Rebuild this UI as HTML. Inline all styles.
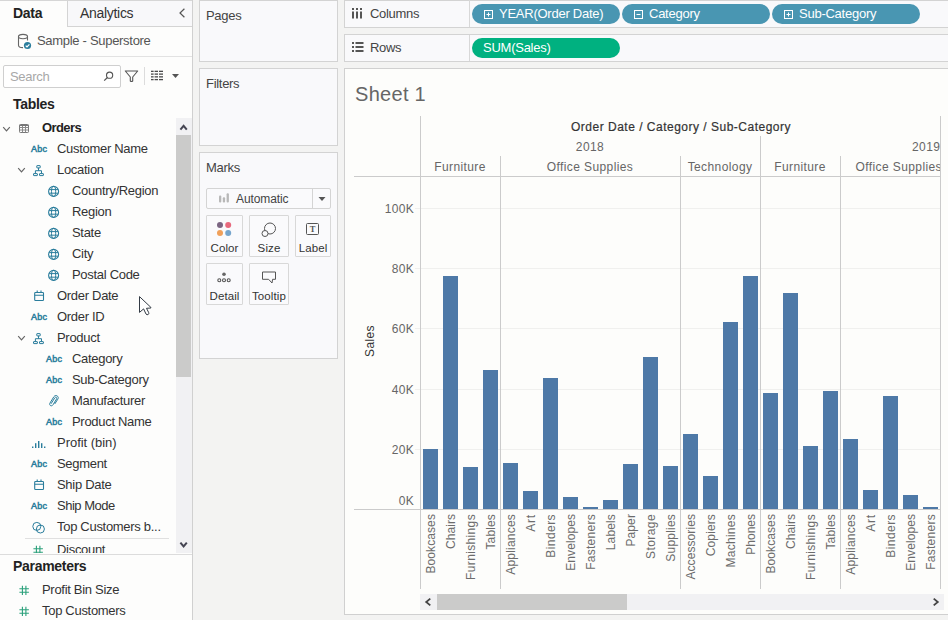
<!DOCTYPE html>
<html><head><meta charset="utf-8"><title>Tableau - Sheet 1</title>
<style>
*{box-sizing:border-box;margin:0;padding:0}
html,body{width:948px;height:620px;overflow:hidden}
body{background:#f3f3f2;font-family:"Liberation Sans",sans-serif;font-size:13px;color:#333;position:relative}
.abs{position:absolute}
#side{position:absolute;left:0;top:0;width:192px;height:620px;background:#fdfdfc;overflow:hidden}
.t{position:absolute;white-space:nowrap;line-height:16px;height:16px;letter-spacing:-0.3px}
.b{font-weight:bold}
.card{position:absolute;background:#f9f9fb;border:1px solid #d3d3d3}
.fld{position:absolute;left:0;height:21px;width:176px}
.fld .t{top:2px;color:#333}
.ic{position:absolute}
.abc{position:absolute;font-size:9px;color:#2a7d9c;letter-spacing:0.3px;line-height:12px;font-weight:normal;-webkit-text-stroke:0.5px #2a7d9c}
.pill{position:absolute;height:20px;border-radius:10px;color:#fff;font-size:13px;line-height:20px;white-space:nowrap;letter-spacing:-0.25px}
.mbtn{position:absolute;background:#fafafc;border:1px solid #d8d8d8;border-radius:1px}
.mbtn span{position:absolute;left:0;width:100%;text-align:center;font-size:11.5px;color:#333;top:25px;line-height:14px;letter-spacing:0.1px}
.vl{position:absolute;width:1px;background:#cbcbcb}
.hl{position:absolute;height:1px;background:#cbcbcb}
.gl{position:absolute;height:1px;background:#f0f0ee;left:415px;width:525px}
.bar{position:absolute;width:15px;background:#4e79a7}
.yl{position:absolute;width:60px;text-align:right;font-size:12px;letter-spacing:0.3px;color:#666;line-height:14px;left:354px}
.hd{position:absolute;font-size:12px;letter-spacing:0.4px;color:#666;line-height:14px;white-space:nowrap;text-align:center}
.xl{position:absolute;font-size:12px;letter-spacing:0.05px;color:#666;line-height:14px;white-space:nowrap;transform-origin:0 0;transform:rotate(-90deg);text-align:right;width:80px;color:#6c6c6c}
</style></head>
<body>
<div id="side">
<div class="abs" style="left:67px;top:0;width:125px;height:27px;background:#f8f8fa;border-left:1px solid #d4d4d4;border-bottom:1px solid #d4d4d4"></div>
<div class="hl" style="left:0;top:0;width:192px;background:#d6d6d6"></div>
<div class="t b" style="left:13px;top:5px;font-size:14px;color:#222">Data</div>
<div class="t" style="left:80px;top:5px;font-size:14px;color:#333">Analytics</div>
<svg class="ic" style="left:176px;top:6px" width="10" height="14" viewBox="0 0 10 14"><path d="M8.4 2.8 L4 7 L8.4 11.2" fill="none" stroke="#555" stroke-width="1.2"/></svg>
<svg class="ic" style="left:17px;top:32px" width="16" height="18" viewBox="0 0 16 18"><path d="M1.5 4.6 C1.5 1.6 10.5 1.6 10.5 4.6 L10.5 8.5 M1.5 4.6 C1.5 7.4 10.5 7.4 10.5 4.6 M1.5 4.6 L1.5 13.2 C1.5 15 4 15.6 6 15.6" fill="none" stroke="#666" stroke-width="1.1"/><circle cx="10.5" cy="13.5" r="3.6" fill="#2a7d9c"/><path d="M8.7 13.6 L10 14.9 L12.4 12.3" fill="none" stroke="#fff" stroke-width="1.2"/></svg>
<div class="t" style="left:37px;top:33px;font-size:13px;color:#555">Sample - Superstore</div>
<div class="hl" style="left:0;top:56px;width:192px;background:#e2e2e2"></div>
<div class="abs" style="left:3px;top:65px;width:118px;height:23px;border:1px solid #cfcfcf;border-radius:2px;background:#fff"></div>
<div class="t" style="left:10px;top:69px;font-size:13px;color:#a8a8a8">Search</div>
<svg class="ic" style="left:102px;top:70px" width="13" height="13" viewBox="0 0 13 13"><circle cx="7.6" cy="5.2" r="3.1" fill="none" stroke="#555" stroke-width="1.1"/><path d="M5.4 7.5 L2.2 10.6" stroke="#555" stroke-width="1.2" fill="none"/></svg>
<svg class="ic" style="left:124px;top:69px" width="15" height="15" viewBox="0 0 15 15"><path d="M1.3 2 H13.7 L8.7 8 V12 Q7.5 13 6.3 12 V8 Z" fill="none" stroke="#555" stroke-width="1.1" stroke-linejoin="round"/></svg>
<div class="vl" style="left:144px;top:67px;height:18px;background:#dcdcdc"></div>
<svg class="ic" style="left:151px;top:70px" width="13" height="11" viewBox="0 0 13 11"><g fill="#4a4a4a"><rect x="0" y="0.7" width="2.6" height="1.3"/><rect x="3.6" y="0.7" width="3.4" height="1.3"/><rect x="8" y="0.7" width="4" height="1.3"/><rect x="0" y="3.45" width="2.6" height="1.3"/><rect x="3.6" y="3.45" width="3.4" height="1.3"/><rect x="8" y="3.45" width="4" height="1.3"/><rect x="0" y="6.2" width="2.6" height="1.3"/><rect x="3.6" y="6.2" width="3.4" height="1.3"/><rect x="8" y="6.2" width="4" height="1.3"/><rect x="0" y="8.95" width="2.6" height="1.3"/><rect x="3.6" y="8.95" width="3.4" height="1.3"/><rect x="8" y="8.95" width="4" height="1.3"/></g></svg>
<svg class="ic" style="left:172px;top:74px" width="8" height="5" viewBox="0 0 8 5"><path d="M0 0 H7 L3.5 4 Z" fill="#555"/></svg>
<div class="t b" style="left:13px;top:96px;font-size:14px;color:#222">Tables</div>
<svg class="ic" style="left:2px;top:126px" width="9" height="7" viewBox="0 0 9 7"><path d="M1.2 1.2 L4.5 4.8 L7.8 1.2" fill="none" stroke="#666" stroke-width="1.2"/></svg>
<svg class="ic" style="left:19px;top:124px" width="11" height="10" viewBox="0 0 11 10"><rect x="0.5" y="0.5" width="9" height="8" rx="0.8" fill="none" stroke="#777" stroke-width="1"/><path d="M0.5 1.5 H9.5" stroke="#777" stroke-width="1" fill="none"/><path d="M0.5 3.5 H9.5 M0.5 6 H9.5" stroke="#8a8a8a" stroke-width="1" fill="none"/><path d="M3.5 2 V8.5 M6.5 2 V8.5" stroke="#8a8a8a" stroke-width="1" fill="none"/></svg>
<div class="t b" style="left:42px;top:120px;font-size:13px;color:#222;letter-spacing:-0.6px">Orders</div>
<div class="abs" style="left:0;top:116px;width:176px;height:437px;overflow:hidden">
<div class="abc" style="left:31px;top:27px">Abc</div>
<div class="t" style="left:57px;top:25px;font-size:13px">Customer Name</div>
<svg class="ic" style="left:17px;top:51px" width="9" height="7" viewBox="0 0 9 7"><path d="M1.2 1.2 L4.5 4.8 L7.8 1.2" fill="none" stroke="#666" stroke-width="1.2"/></svg>
<svg class="ic" style="left:33px;top:49px" width="12" height="12" viewBox="0 0 12 12"><g fill="none" stroke="#2a7d9c" stroke-width="1"><rect x="3.8" y="0.6" width="3.4" height="2.3" rx="0.3"/><rect x="0.5" y="8.6" width="3.9" height="2" rx="0.3"/><rect x="6.5" y="8.6" width="3.9" height="2" rx="0.3"/><path d="M5.5 2.9 V5.7 M2.4 8.6 V5.7 H8.5 V8.6"/></g></svg>
<div class="t" style="left:57px;top:46px;font-size:13px">Location</div>
<svg class="ic" style="left:48px;top:69px" width="12" height="12" viewBox="0 0 12 12"><g fill="none" stroke="#2a7d9c" stroke-width="1"><circle cx="5.6" cy="6.4" r="5" stroke-width="1.1"/><ellipse cx="5.6" cy="6.4" rx="2.1" ry="5"/><path d="M1.2 4.6 H10 M1.2 8.2 H10"/></g></svg>
<div class="t" style="left:72px;top:67px;font-size:13px">Country/Region</div>
<svg class="ic" style="left:48px;top:90px" width="12" height="12" viewBox="0 0 12 12"><g fill="none" stroke="#2a7d9c" stroke-width="1"><circle cx="5.6" cy="6.4" r="5" stroke-width="1.1"/><ellipse cx="5.6" cy="6.4" rx="2.1" ry="5"/><path d="M1.2 4.6 H10 M1.2 8.2 H10"/></g></svg>
<div class="t" style="left:72px;top:88px;font-size:13px">Region</div>
<svg class="ic" style="left:48px;top:111px" width="12" height="12" viewBox="0 0 12 12"><g fill="none" stroke="#2a7d9c" stroke-width="1"><circle cx="5.6" cy="6.4" r="5" stroke-width="1.1"/><ellipse cx="5.6" cy="6.4" rx="2.1" ry="5"/><path d="M1.2 4.6 H10 M1.2 8.2 H10"/></g></svg>
<div class="t" style="left:72px;top:109px;font-size:13px">State</div>
<svg class="ic" style="left:48px;top:132px" width="12" height="12" viewBox="0 0 12 12"><g fill="none" stroke="#2a7d9c" stroke-width="1"><circle cx="5.6" cy="6.4" r="5" stroke-width="1.1"/><ellipse cx="5.6" cy="6.4" rx="2.1" ry="5"/><path d="M1.2 4.6 H10 M1.2 8.2 H10"/></g></svg>
<div class="t" style="left:72px;top:130px;font-size:13px">City</div>
<svg class="ic" style="left:48px;top:153px" width="12" height="12" viewBox="0 0 12 12"><g fill="none" stroke="#2a7d9c" stroke-width="1"><circle cx="5.6" cy="6.4" r="5" stroke-width="1.1"/><ellipse cx="5.6" cy="6.4" rx="2.1" ry="5"/><path d="M1.2 4.6 H10 M1.2 8.2 H10"/></g></svg>
<div class="t" style="left:72px;top:151px;font-size:13px">Postal Code</div>
<svg class="ic" style="left:33px;top:174px" width="12" height="12" viewBox="0 0 12 12"><g fill="none" stroke="#2a7d9c" stroke-width="1.1"><rect x="1.7" y="2.5" width="8.8" height="8" rx="0.8"/><path d="M1.7 5.3 H10.5 M4.2 0.6 V3 M8 0.6 V3"/></g></svg>
<div class="t" style="left:57px;top:172px;font-size:13px">Order Date</div>
<div class="abc" style="left:31px;top:195px">Abc</div>
<div class="t" style="left:57px;top:193px;font-size:13px">Order ID</div>
<svg class="ic" style="left:17px;top:219px" width="9" height="7" viewBox="0 0 9 7"><path d="M1.2 1.2 L4.5 4.8 L7.8 1.2" fill="none" stroke="#666" stroke-width="1.2"/></svg>
<svg class="ic" style="left:33px;top:217px" width="12" height="12" viewBox="0 0 12 12"><g fill="none" stroke="#2a7d9c" stroke-width="1"><rect x="3.8" y="0.6" width="3.4" height="2.3" rx="0.3"/><rect x="0.5" y="8.6" width="3.9" height="2" rx="0.3"/><rect x="6.5" y="8.6" width="3.9" height="2" rx="0.3"/><path d="M5.5 2.9 V5.7 M2.4 8.6 V5.7 H8.5 V8.6"/></g></svg>
<div class="t" style="left:57px;top:214px;font-size:13px">Product</div>
<div class="abc" style="left:46px;top:237px">Abc</div>
<div class="t" style="left:72px;top:235px;font-size:13px">Category</div>
<div class="abc" style="left:46px;top:258px">Abc</div>
<div class="t" style="left:72px;top:256px;font-size:13px">Sub-Category</div>
<svg class="ic" style="left:48px;top:278px" width="12" height="14" viewBox="0 0 12 14"><g fill="none" stroke="#2a7d9c" stroke-width="1" stroke-linecap="round"><path d="M3.2 9.5 L6.8 3.8 C7.6 2.6 9.4 3.6 8.6 4.9 L5 10.8 C3.6 13 0.6 11.2 2 9 L5.8 2.8 C7.6 0 11.6 2.4 9.8 5.2 L7 9.6"/></g></svg>
<div class="t" style="left:72px;top:277px;font-size:13px">Manufacturer</div>
<div class="abc" style="left:46px;top:300px">Abc</div>
<div class="t" style="left:72px;top:298px;font-size:13px">Product Name</div>
<svg class="ic" style="left:32px;top:321px" width="14" height="12" viewBox="0 0 14 12"><g fill="#2a7d9c"><rect x="0" y="9.5" width="1.4" height="1.5"/><rect x="3" y="6.2" width="1.4" height="4.8"/><rect x="6" y="4" width="1.4" height="7"/><rect x="9" y="6.2" width="1.4" height="4.8"/><rect x="12" y="9.5" width="1.4" height="1.5"/></g></svg>
<div class="t" style="left:57px;top:319px;font-size:13px;letter-spacing:-0.03px">Profit (bin)</div>
<div class="abc" style="left:31px;top:342px">Abc</div>
<div class="t" style="left:57px;top:340px;font-size:13px">Segment</div>
<svg class="ic" style="left:33px;top:363px" width="12" height="12" viewBox="0 0 12 12"><g fill="none" stroke="#2a7d9c" stroke-width="1.1"><rect x="1.7" y="2.5" width="8.8" height="8" rx="0.8"/><path d="M1.7 5.3 H10.5 M4.2 0.6 V3 M8 0.6 V3"/></g></svg>
<div class="t" style="left:57px;top:361px;font-size:13px">Ship Date</div>
<div class="abc" style="left:31px;top:384px">Abc</div>
<div class="t" style="left:57px;top:382px;font-size:13px;letter-spacing:-0.5px">Ship Mode</div>
<svg class="ic" style="left:32px;top:405px" width="14" height="13" viewBox="0 0 14 13"><g fill="none" stroke="#2a7d9c" stroke-width="1"><circle cx="4.8" cy="5.4" r="4"/><circle cx="8.4" cy="8" r="4"/></g></svg>
<div class="t" style="left:57px;top:403px;font-size:13px">Top Customers b...</div>
<div class="hl" style="left:25px;top:422px;width:144px;background:#e0e0e0"></div>
<svg class="ic" style="left:33px;top:429px" width="11" height="12" viewBox="0 0 11 12"><g fill="none" stroke="#2aa07a" stroke-width="1.1"><path d="M3.4 0.8 V10 M6.9 0.8 V10 M0.4 3.7 H9.9 M0.4 7.2 H9.9"/></g></svg>
<div class="t" style="left:57px;top:426px;font-size:13px">Discount</div>
</div>
<div class="abs" style="left:176px;top:118px;width:16px;height:435px;background:#f1f1f3"></div>
<div class="abs" style="left:176px;top:135px;width:15px;height:242px;background:#cbcbca"></div>
<svg class="ic" style="left:178px;top:123px" width="10" height="8" viewBox="0 0 10 8"><path d="M2.4 6.6 L5.6 2.8 L8.8 6.6" fill="none" stroke="#454552" stroke-width="2"/></svg>
<svg class="ic" style="left:178px;top:541px" width="10" height="8" viewBox="0 0 10 8"><path d="M2.4 1.6 L5.6 5.4 L8.8 1.6" fill="none" stroke="#454552" stroke-width="2"/></svg>
<div class="hl" style="left:0;top:554px;width:192px;background:#dcdcdc"></div>
<div class="t b" style="left:13px;top:558px;font-size:14px;color:#222">Parameters</div>
<svg class="ic" style="left:19px;top:585px" width="11" height="12" viewBox="0 0 11 12"><g fill="none" stroke="#2aa07a" stroke-width="1.1"><path d="M3.4 0.8 V10 M6.9 0.8 V10 M0.4 3.7 H9.9 M0.4 7.2 H9.9"/></g></svg>
<div class="t" style="left:42px;top:582px;font-size:13px">Profit Bin Size</div>
<svg class="ic" style="left:19px;top:606px" width="11" height="12" viewBox="0 0 11 12"><g fill="none" stroke="#2aa07a" stroke-width="1.1"><path d="M3.4 0.8 V10 M6.9 0.8 V10 M0.4 3.7 H9.9 M0.4 7.2 H9.9"/></g></svg>
<div class="t" style="left:42px;top:603px;font-size:13px">Top Customers</div>
</div>
<div class="vl" style="left:192px;top:0;height:620px;background:#d0d0d0"></div>
<div class="card" style="left:199px;top:0;width:139px;height:62px"></div>
<div class="t" style="left:206px;top:8px;font-size:13px;color:#444">Pages</div>
<div class="card" style="left:199px;top:68px;width:139px;height:78px"></div>
<div class="t" style="left:206px;top:76px;font-size:13px;color:#444">Filters</div>
<div class="card" style="left:199px;top:152px;width:139px;height:207px"></div>
<div class="t" style="left:206px;top:160px;font-size:13px;color:#444">Marks</div>
<div class="abs" style="left:206px;top:188px;width:125px;height:21px;border:1px solid #d4d4d4;border-radius:2px;background:#fafafc"></div>
<div class="vl" style="left:312px;top:189px;height:19px;background:#d4d4d4"></div>
<svg class="ic" style="left:219px;top:193px" width="11" height="10" viewBox="0 0 11 10"><g fill="#b8b8b8"><rect x="0" y="2.6" width="2.3" height="7" rx="1"/><rect x="3.8" y="4.3" width="2.3" height="5.3" rx="1"/><rect x="7.6" y="0.2" width="2.3" height="9.4" rx="1"/></g></svg>
<div class="t" style="left:236px;top:191px;font-size:12px;color:#444;letter-spacing:-0.1px">Automatic</div>
<svg class="ic" style="left:318px;top:197px" width="8" height="5" viewBox="0 0 8 5"><path d="M0.5 0 H7.5 L4 4 Z" fill="#555"/></svg>
<div class="mbtn" style="left:206px;top:215px;width:37px;height:42px"><span>Color</span></div>
<svg class="ic" style="left:216px;top:221px" width="17" height="17" viewBox="0 0 17 17"><circle cx="4" cy="4" r="3" fill="#7b6582"/><circle cx="12.2" cy="4" r="3" fill="#e8697d"/><circle cx="4" cy="12" r="3" fill="#f0a05a"/><circle cx="12.2" cy="12" r="3" fill="#76a5cc"/></svg>
<div class="mbtn" style="left:249px;top:215px;width:40px;height:42px"><span>Size</span></div>
<svg class="ic" style="left:261px;top:222px" width="16" height="16" viewBox="0 0 16 16"><circle cx="9" cy="6.5" r="5.5" fill="none" stroke="#555" stroke-width="1"/><circle cx="4" cy="11.5" r="3" fill="#fafafc" stroke="#555" stroke-width="1"/></svg>
<div class="mbtn" style="left:295px;top:215px;width:36px;height:42px"><span>Label</span></div>
<svg class="ic" style="left:306px;top:223px" width="14" height="13" viewBox="0 0 14 13"><rect x="0.5" y="0.5" width="12" height="11" rx="1" fill="none" stroke="#555" stroke-width="1"/><text x="6.5" y="9.3" font-family="Liberation Serif, serif" font-size="8.5" font-weight="bold" text-anchor="middle" fill="#555">T</text></svg>
<div class="mbtn" style="left:206px;top:263px;width:37px;height:42px"><span>Detail</span></div>
<svg class="ic" style="left:217px;top:272px" width="14" height="12" viewBox="0 0 14 12"><circle cx="7" cy="2.3" r="1.8" fill="#666"/><circle cx="2.3" cy="8.3" r="1.5" fill="none" stroke="#555" stroke-width="1.1"/><circle cx="7" cy="8.3" r="1.5" fill="none" stroke="#555" stroke-width="1.1"/><circle cx="11.7" cy="8.3" r="1.5" fill="none" stroke="#555" stroke-width="1.1"/></svg>
<div class="mbtn" style="left:249px;top:263px;width:40px;height:42px"><span>Tooltip</span></div>
<svg class="ic" style="left:261px;top:271px" width="16" height="14" viewBox="0 0 16 14"><path d="M1.5 1 H14.5 V8.3 H11.6 L11 12 L7.6 8.3 H1.5 Z" fill="none" stroke="#555" stroke-width="1" stroke-linejoin="round"/></svg>
<div class="card" style="left:344px;top:0;width:611px;height:28px"></div>
<div class="vl" style="left:469px;top:0;height:27px;background:#d8d8d8"></div>
<svg class="ic" style="left:352px;top:8px" width="11" height="11" viewBox="0 0 11 11"><g fill="#555"><rect x="0" y="0" width="2" height="2"/><rect x="4" y="0" width="2" height="2"/><rect x="8" y="0" width="2" height="2"/><rect x="0" y="3.5" width="2" height="7"/><rect x="4" y="3.5" width="2" height="7"/><rect x="8" y="3.5" width="2" height="7"/></g></svg>
<div class="t" style="left:370px;top:6px;font-size:13px;color:#444">Columns</div>
<div class="card" style="left:344px;top:34px;width:611px;height:28px"></div>
<div class="vl" style="left:469px;top:35px;height:26px;background:#d8d8d8"></div>
<svg class="ic" style="left:352px;top:42px" width="12" height="10" viewBox="0 0 12 10"><g fill="#555"><rect x="0" y="0" width="2" height="2"/><rect x="3.5" y="0" width="8" height="2"/><rect x="0" y="4" width="2" height="2"/><rect x="3.5" y="4" width="8" height="2"/><rect x="0" y="8" width="2" height="2"/><rect x="3.5" y="8" width="8" height="2"/></g></svg>
<div class="t" style="left:370px;top:40px;font-size:13px;color:#444">Rows</div>
<div class="pill" style="left:472px;top:4px;width:148px;background:#4996b2"><svg class="ic" style="left:12px;top:6px" width="10" height="10" viewBox="0 0 10 10"><rect x="0.5" y="0.5" width="8" height="8" fill="none" stroke="#fff" stroke-width="1"/><path d="M2.5 4.5 H6.5" stroke="#fff" stroke-width="1"/><path d="M4.5 2.5 V6.5" stroke="#fff" stroke-width="1"/></svg><span class="abs" style="left:27px;top:0">YEAR(Order Date)</span></div>
<div class="pill" style="left:622px;top:4px;width:148px;background:#4996b2"><svg class="ic" style="left:12px;top:6px" width="10" height="10" viewBox="0 0 10 10"><rect x="0.5" y="0.5" width="8" height="8" fill="none" stroke="#fff" stroke-width="1"/><path d="M2.5 4.5 H6.5" stroke="#fff" stroke-width="1"/></svg><span class="abs" style="left:27px;top:0">Category</span></div>
<div class="pill" style="left:772px;top:4px;width:148px;background:#4996b2"><svg class="ic" style="left:12px;top:6px" width="10" height="10" viewBox="0 0 10 10"><rect x="0.5" y="0.5" width="8" height="8" fill="none" stroke="#fff" stroke-width="1"/><path d="M2.5 4.5 H6.5" stroke="#fff" stroke-width="1"/><path d="M4.5 2.5 V6.5" stroke="#fff" stroke-width="1"/></svg><span class="abs" style="left:27px;top:0">Sub-Category</span></div>
<div class="pill" style="left:472px;top:38px;width:148px;background:#00b180"><span class="abs" style="left:11px;top:0">SUM(Sales)</span></div>
<div class="abs" style="left:344px;top:68px;width:611px;height:547px;background:#fdfdfb;border:1px solid #d0d0d0"></div>
<div class="t" style="left:355px;top:82px;font-size:20px;line-height:24px;height:24px;color:#666;letter-spacing:0.3px">Sheet 1</div>
<div class="hd" style="left:531px;top:120px;width:300px;color:#333;letter-spacing:0.5px;-webkit-text-stroke:0.2px #333">Order Date / Category / Sub-Category</div>
<div class="hd" style="left:560px;top:140px;width:60px">2018</div>
<div class="abs" style="left:760px;top:116px;width:180px;height:400px;overflow:hidden"><div class="hd" style="left:152px;top:24px;width:60px;text-align:left">2019</div><div class="hd" style="left:95.5px;top:44px;text-align:left">Office Supplies</div></div>
<div class="hd" style="left:400px;top:160px;width:120px">Furniture</div>
<div class="hd" style="left:530px;top:160px;width:120px">Office Supplies</div>
<div class="hd" style="left:660px;top:160px;width:120px">Technology</div>
<div class="hd" style="left:740px;top:160px;width:120px">Furniture</div>
<div class="gl" style="top:208px"></div>
<div class="gl" style="top:268px"></div>
<div class="gl" style="top:328px"></div>
<div class="gl" style="top:389px"></div>
<div class="gl" style="top:449px"></div>
<div class="bar" style="left:423px;top:449px;height:60px"></div>
<div class="bar" style="left:443px;top:276px;height:233px"></div>
<div class="bar" style="left:463px;top:467px;height:42px"></div>
<div class="bar" style="left:483px;top:370px;height:139px"></div>
<div class="bar" style="left:503px;top:463px;height:46px"></div>
<div class="bar" style="left:523px;top:491px;height:18px"></div>
<div class="bar" style="left:543px;top:378px;height:131px"></div>
<div class="bar" style="left:563px;top:497px;height:12px"></div>
<div class="bar" style="left:583px;top:507px;height:2px"></div>
<div class="bar" style="left:603px;top:500px;height:9px"></div>
<div class="bar" style="left:623px;top:464px;height:45px"></div>
<div class="bar" style="left:643px;top:357px;height:152px"></div>
<div class="bar" style="left:663px;top:466px;height:43px"></div>
<div class="bar" style="left:683px;top:434px;height:75px"></div>
<div class="bar" style="left:703px;top:476px;height:33px"></div>
<div class="bar" style="left:723px;top:322px;height:187px"></div>
<div class="bar" style="left:743px;top:276px;height:233px"></div>
<div class="bar" style="left:763px;top:393px;height:116px"></div>
<div class="bar" style="left:783px;top:293px;height:216px"></div>
<div class="bar" style="left:803px;top:446px;height:63px"></div>
<div class="bar" style="left:823px;top:391px;height:118px"></div>
<div class="bar" style="left:843px;top:439px;height:70px"></div>
<div class="bar" style="left:863px;top:490px;height:19px"></div>
<div class="bar" style="left:883px;top:396px;height:113px"></div>
<div class="bar" style="left:903px;top:495px;height:14px"></div>
<div class="bar" style="left:923px;top:507px;height:2px"></div>
<div class="vl" style="left:420px;top:116px;height:473px"></div>
<div class="vl" style="left:500px;top:156px;height:433px"></div>
<div class="vl" style="left:680px;top:156px;height:433px"></div>
<div class="vl" style="left:840px;top:156px;height:433px"></div>
<div class="vl" style="left:760px;top:136px;height:453px"></div>
<div class="vl" style="left:940px;top:116px;height:473px"></div>
<div class="hl" style="left:354px;top:176px;width:587px"></div>
<div class="hl" style="left:354px;top:509px;width:587px"></div>
<div class="yl" style="top:202px">100K</div>
<div class="yl" style="top:262px">80K</div>
<div class="yl" style="top:322px">60K</div>
<div class="yl" style="top:383px">40K</div>
<div class="yl" style="top:443px">20K</div>
<div class="yl" style="top:494px">0K</div>
<div class="hd" style="left:363px;top:371px;width:60px;transform-origin:0 0;transform:rotate(-90deg);color:#333">Sales</div>
<div class="xl" style="left:424px;top:594px;letter-spacing:0.1px">Bookcases</div>
<div class="xl" style="left:444px;top:594px;letter-spacing:0.05px">Chairs</div>
<div class="xl" style="left:464px;top:594px;letter-spacing:0.35px">Furnishings</div>
<div class="xl" style="left:484px;top:594px;letter-spacing:0.15px">Tables</div>
<div class="xl" style="left:504px;top:594px;letter-spacing:0.2px">Appliances</div>
<div class="xl" style="left:524px;top:594px;letter-spacing:0.8px">Art</div>
<div class="xl" style="left:544px;top:594px;letter-spacing:0.43px">Binders</div>
<div class="xl" style="left:564px;top:594px;letter-spacing:0.08px">Envelopes</div>
<div class="xl" style="left:584px;top:594px;letter-spacing:0.27px">Fasteners</div>
<div class="xl" style="left:604px;top:594px;letter-spacing:0.15px">Labels</div>
<div class="xl" style="left:624px;top:594px;letter-spacing:0.1px">Paper</div>
<div class="xl" style="left:644px;top:594px;letter-spacing:0.43px">Storage</div>
<div class="xl" style="left:664px;top:594px;letter-spacing:0.2px">Supplies</div>
<div class="xl" style="left:684px;top:594px;letter-spacing:0.08px">Accessories</div>
<div class="xl" style="left:704px;top:594px;letter-spacing:0.13px">Copiers</div>
<div class="xl" style="left:724px;top:594px;letter-spacing:0.27px">Machines</div>
<div class="xl" style="left:744px;top:594px;letter-spacing:0.0px">Phones</div>
<div class="xl" style="left:764px;top:594px;letter-spacing:0.1px">Bookcases</div>
<div class="xl" style="left:784px;top:594px;letter-spacing:0.05px">Chairs</div>
<div class="xl" style="left:804px;top:594px;letter-spacing:0.35px">Furnishings</div>
<div class="xl" style="left:824px;top:594px;letter-spacing:0.15px">Tables</div>
<div class="xl" style="left:844px;top:594px;letter-spacing:0.2px">Appliances</div>
<div class="xl" style="left:864px;top:594px;letter-spacing:0.8px">Art</div>
<div class="xl" style="left:884px;top:594px;letter-spacing:0.43px">Binders</div>
<div class="xl" style="left:904px;top:594px;letter-spacing:0.08px">Envelopes</div>
<div class="xl" style="left:924px;top:594px;letter-spacing:0.27px">Fasteners</div>
<div class="abs" style="left:420px;top:594px;width:524px;height:16px;background:#f1f1f3"></div>
<div class="abs" style="left:437px;top:594px;width:190px;height:16px;background:#cbcbca"></div>
<svg class="ic" style="left:424px;top:597px" width="8" height="10" viewBox="0 0 8 10"><path d="M6.3 1.6 L2.2 5 L6.3 8.4" fill="none" stroke="#444" stroke-width="1.8"/></svg>
<svg class="ic" style="left:932px;top:597px" width="8" height="10" viewBox="0 0 8 10"><path d="M1.7 1.6 L5.8 5 L1.7 8.4" fill="none" stroke="#444" stroke-width="1.8"/></svg>
<svg class="ic" style="left:138px;top:295px" width="16" height="22" viewBox="0 0 16 22"><path d="M1.5 1.6 L1.5 17.4 L5.6 13.9 L8 19 Q9 20.3 10.3 19.4 Q11.2 18.6 10.6 17.4 L8.5 13.3 L12.9 13 L12.9 12.4 Z" fill="#fff" stroke="#1c2530" stroke-width="0.9" stroke-linejoin="round"/></svg>
</body></html>
